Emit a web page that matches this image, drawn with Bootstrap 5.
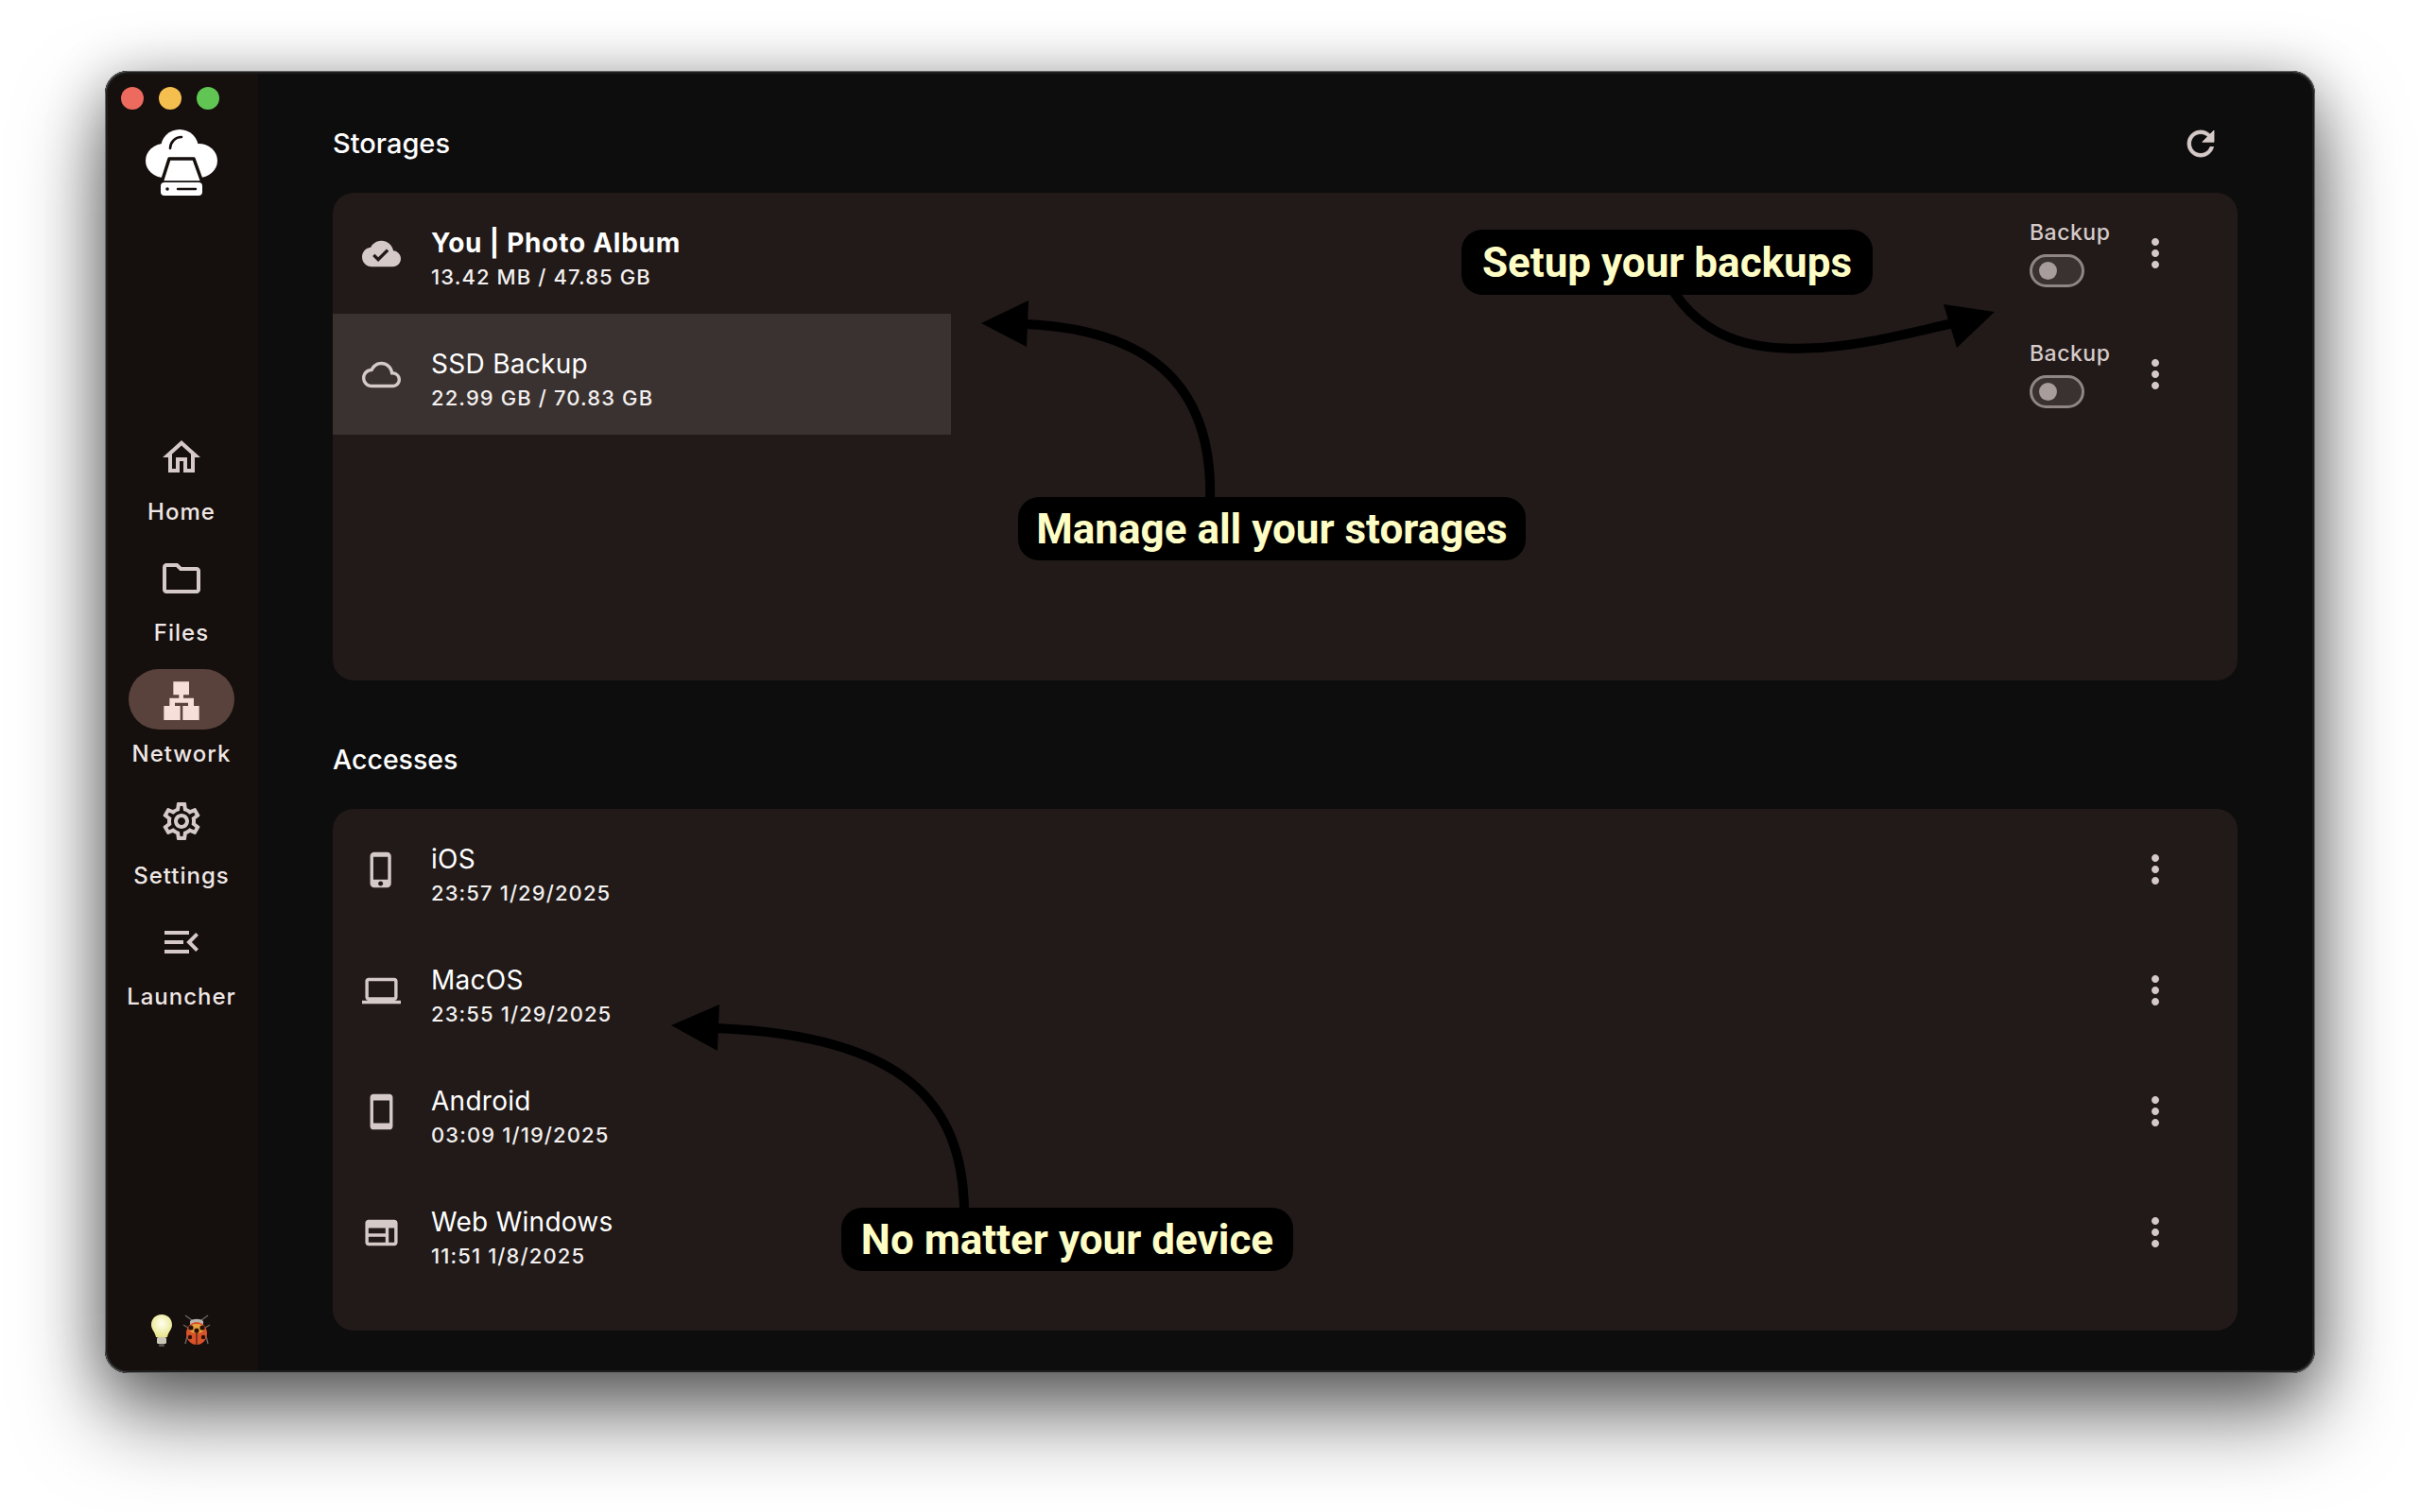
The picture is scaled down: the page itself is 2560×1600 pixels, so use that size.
<!doctype html>
<html lang="en"><head><meta charset="utf-8"><title>Storages</title>
<link href="https://cdn.jsdelivr.net/npm/bootstrap@5.3.0/dist/css/bootstrap.min.css" rel="stylesheet">
<style>
html,body{height:100%}
body{background:#fff;font-family:Inter,"Liberation Sans",sans-serif;color:#fff;overflow:hidden;padding:75px 111px 0 111px}
.app-window{position:relative;height:1378px;border-radius:24px;background:#0e0d0d;box-shadow:0 44px 90px rgba(0,0,0,.55),0 10px 60px rgba(0,0,0,.3);overflow:hidden}
.app-window::after{content:"";position:absolute;inset:0;border-radius:24px;box-shadow:inset 0 0 0 1px #666,inset 0 0 0 3px #1e1e1e;pointer-events:none;z-index:5}
.side-rail{width:162px;flex:none;background:#150f0d;padding-top:55px}
.lights{position:absolute;left:17px;top:17px;gap:16px}
.light{width:24px;height:24px;border-radius:50%}
.logo-box{height:83px}
.logo-box svg{width:80px;height:80px}
.nav-stack{margin-top:239px}
.rail-item{height:128.2px;color:#efe7e5}
.rail-pill{width:112px;height:64px;border-radius:32px;display:flex;align-items:center;justify-content:center}
.rail-pill.on{background:#5a423c}
.rail-item svg{width:48px;height:48px;fill:#d5cac8}
.rail-item .net-ic{fill:#f5dfd8}
.rail-label{font-size:24px;line-height:30px;font-weight:500;letter-spacing:1px;margin-top:11px}
.foot-icons{height:80px;gap:6px;padding-bottom:11px}
.main-pane{padding:0 82px 0 79px;min-width:0}
.sect-head{height:129px;padding-top:56px;font-size:29px;font-weight:500;line-height:42px}
.sect-head.two{height:136px;padding-top:63px;font-size:28.5px}
.refresh-ic{margin-right:18px;stroke:#d5cac8;stroke-width:.5}
.panel{background:#211a19;border-radius:22px;overflow:hidden}
.panel.top{height:516px}
.panel.bottom{height:552px}
.line{height:128px}
.line .icon-cell{width:104px;flex:none}
.line .icon-cell svg{width:41px;height:41px;fill:#d5cac8;margin-left:31px;display:block}
.line .txt{width:550px;flex:none;padding-top:10px}
.line.sel{background:#3a3230;width:654px}
.t1{font-size:28px;line-height:36px;letter-spacing:.28px}
.t1.b{font-weight:700;letter-spacing:.75px}
.t2{font-size:22px;line-height:30px;letter-spacing:1.1px;font-weight:500;margin-top:3px;color:#f3f0ef}
.right-tools{position:absolute;right:0;top:0;height:128px;width:220px}
.backup-col{position:absolute;left:0;top:28px;width:90px}
.backup-lbl{font-size:23px;line-height:28px;font-weight:500;color:#d5cac8;letter-spacing:.5px}
.tog{display:block;width:58px;height:35px;border:3px solid #8f8583;border-radius:18px;background:#3a3230;margin-top:9px;position:relative}
.tog::after{content:"";position:absolute;left:7px;top:5px;width:19px;height:19px;border-radius:50%;background:#a89d9a}
.kebab{width:48px;height:48px;fill:#d5cac8;display:block}
.keb-wrap{position:absolute;right:63px;top:40px}
.rowwrap{position:relative}
.note{position:absolute;background:#000;border-radius:22px;color:#fdfdc5;font-family:Roboto,"Liberation Sans",sans-serif;font-weight:700;font-size:44px;line-height:46px;white-space:nowrap;display:flex;align-items:center;justify-content:center}
.note.n1{left:1435px;top:168px;width:435px;height:69px}
.note.n2{left:966px;top:451px;width:537px;height:67px}
.note.n3{left:779px;top:1203px;width:478px;height:67px}
.arrows{position:absolute;left:-111px;top:-75px;width:2560px;height:1600px;pointer-events:none}
</style></head>
<body>
<div class="app-window d-flex">
  <aside class="side-rail d-flex flex-column align-items-center">
    <div class="lights d-flex"><span class="light" style="background:#ec6a5e"></span><span class="light" style="background:#f4bf4f"></span><span class="light" style="background:#61c554"></span></div>
    <div class="logo-box d-flex justify-content-center">
      <svg viewBox="152 130 80 80"><g fill="#fff"><circle cx="190" cy="157" r="20"/><ellipse cx="174" cy="170" rx="20" ry="18"/><ellipse cx="210" cy="170" rx="20" ry="18"/><rect x="172" y="160" width="40" height="28"/></g>
      <path d="M179 168h26l9 25h-43z" fill="#fff" stroke="#150f0d" stroke-width="3.5" stroke-linejoin="round"/>
      <rect x="170" y="193" width="44" height="14" rx="4" fill="#fff"/><circle cx="177" cy="200" r="1.8" fill="#150f0d"/><path d="M188 200h19" stroke="#150f0d" stroke-width="2.4" stroke-linecap="round"/>
      <path d="M180 157c0-6 5-12 12-12" fill="none" stroke="#150f0d" stroke-width="2.6" stroke-linecap="round"/></svg>
    </div>
    <nav class="nav-stack d-flex flex-column align-items-center">
      <div class="rail-item d-flex flex-column align-items-center"><span class="rail-pill"><svg viewBox="0 0 24 24"><path d="M12 5.69l5 4.5V18h-2v-6H9v6H7v-7.81l5-4.5M12 3L2 12h3v8h6v-6h2v6h6v-8h3L12 3z"/></svg></span><span class="rail-label">Home</span></div>
      <div class="rail-item d-flex flex-column align-items-center"><span class="rail-pill"><svg viewBox="0 0 24 24"><path d="M9.17 6l2 2H20v10H4V6h5.17M10 4H4c-1.1 0-1.99.9-1.99 2L2 18c0 1.1.9 2 2 2h16c1.1 0 2-.9 2-2V8c0-1.1-.9-2-2-2h-8l-2-2z"/></svg></span><span class="rail-label">Files</span></div>
      <div class="rail-item d-flex flex-column align-items-center"><span class="rail-pill on"><svg class="net-ic" viewBox="144 72 144 144"><path d="M190 88h50v42h-50zM208 130h14v10h-14zM178 140h77v15h-77zM178 155h17v10h-17zM237 155h18v10h-18zM160 165h52v45h-52zM220 165h52v45h-52z"/></svg></span><span class="rail-label">Network</span></div>
      <div class="rail-item d-flex flex-column align-items-center"><span class="rail-pill"><svg viewBox="0 0 24 24"><path d="M19.43 12.98c.04-.32.07-.64.07-.98 0-.34-.03-.66-.07-.98l2.11-1.65c.19-.15.24-.42.12-.64l-2-3.46c-.09-.16-.26-.25-.44-.25-.06 0-.12.01-.17.03l-2.49 1c-.52-.4-1.08-.73-1.69-.98l-.38-2.65C14.46 2.18 14.25 2 14 2h-4c-.25 0-.46.18-.49.42l-.38 2.65c-.61.25-1.17.59-1.69.98l-2.49-1c-.06-.02-.12-.03-.18-.03-.17 0-.34.09-.43.25l-2 3.46c-.13.22-.07.49.12.64l2.11 1.65c-.04.32-.07.65-.07.98 0 .33.03.66.07.98l-2.11 1.65c-.19.15-.24.42-.12.64l2 3.46c.09.16.26.25.44.25.06 0 .12-.01.17-.03l2.49-1c.52.4 1.08.73 1.69.98l.38 2.65c.03.24.24.42.49.42h4c.25 0 .46-.18.49-.42l.38-2.65c.61-.25 1.17-.59 1.69-.98l2.49 1c.06.02.12.03.18.03.17 0 .34-.09.43-.25l2-3.46c.12-.22.07-.49-.12-.64l-2.11-1.65zm-1.98-1.71c.04.31.05.52.05.73 0 .21-.02.43-.05.73l-.14 1.13.89.7 1.08.84-.7 1.21-1.27-.51-1.04-.42-.9.68c-.43.32-.84.56-1.25.73l-1.06.43-.16 1.13-.2 1.35h-1.4l-.19-1.35-.16-1.13-1.06-.43c-.43-.18-.83-.41-1.23-.71l-.91-.7-1.06.43-1.27.51-.7-1.21 1.08-.84.89-.7-.14-1.13c-.03-.31-.05-.54-.05-.74s.02-.43.05-.73l.14-1.13-.89-.7-1.08-.84.7-1.21 1.27.51 1.04.42.9-.68c.43-.32.84-.56 1.25-.73l1.06-.43.16-1.13.2-1.35h1.39l.19 1.35.16 1.13 1.06.43c.43.18.83.41 1.23.71l.91.7 1.06-.43 1.27-.51.7 1.21-1.07.85-.89.7.14 1.13zM12 8c-2.21 0-4 1.79-4 4s1.79 4 4 4 4-1.79 4-4-1.79-4-4-4zm0 6c-1.1 0-2-.9-2-2s.9-2 2-2 2 .9 2 2-.9 2-2 2z"/></svg></span><span class="rail-label">Settings</span></div>
      <div class="rail-item d-flex flex-column align-items-center"><span class="rail-pill"><svg viewBox="0 0 24 24"><path d="M3 18h13v-2H3v2zm0-5h10v-2H3v2zm0-7v2h13V6H3zm18 9.59L17.42 12 21 8.41 19.59 7l-5 5 5 5L21 15.59z"/></svg></span><span class="rail-label">Launcher</span></div>
    </nav>
    <div class="foot-icons mt-auto d-flex align-items-center">
      <svg width="26" height="36" viewBox="0 0 26 36"><defs><radialGradient id="bulbg" cx=".5" cy=".4" r=".6"><stop offset="0" stop-color="#fffff0"/><stop offset="1" stop-color="#e8e58a"/></radialGradient></defs><path d="M13 1C6 1 2 6 2 12c0 5 4 7 5 13h12c1-6 5-8 5-13C24 6 20 1 13 1z" fill="url(#bulbg)"/><rect x="8" y="25" width="10" height="7" rx="1.5" fill="#c9c6b8"/><rect x="10" y="32" width="6" height="3" rx="1" fill="#55524a"/></svg>
      <svg width="36" height="36" viewBox="0 0 36 36"><g stroke="#6b6662" stroke-width="1.4" fill="none"><path d="M13 7L6 2M23 7l7-5M9 15l-5-3M27 15l5-3M8 24l-2 8M28 24l2 8"/></g><path d="M11 8c3-3 11-3 14 0v4H11z" fill="#b9b6b2"/><ellipse cx="18" cy="21" rx="11" ry="12" fill="#d8522a"/><ellipse cx="18" cy="16" rx="8" ry="5" fill="#e8a23c"/><g fill="#2a1008"><circle cx="12" cy="15" r="2.6"/><circle cx="24" cy="15" r="2.6"/><circle cx="18" cy="18" r="2.6"/><circle cx="11" cy="25" r="2.2"/><circle cx="25" cy="25" r="2.2"/></g><path d="M18 18v15" stroke="#2a1008" stroke-width="1"/></svg>
    </div>
  </aside>
  <main class="main-pane flex-grow-1">
    <div class="sect-head d-flex justify-content-between"><span>Storages</span>
      <svg width="42" height="42" viewBox="0 0 24 24" fill="#d5cac8" class="refresh-ic"><path d="M17.65 6.35C16.2 4.9 14.21 4 12 4c-4.42 0-7.99 3.58-7.99 8s3.57 8 7.99 8c3.73 0 6.84-2.55 7.73-6h-2.08c-.82 2.33-3.04 4-5.65 4-3.31 0-6-2.69-6-6s2.69-6 6-6c1.66 0 3.14.69 4.22 1.78L13 11h7V4l-2.35 2.35z"/></svg></div>
    <section class="panel top">
      <div class="rowwrap">
        <div class="line d-flex align-items-center"><div class="icon-cell"><svg viewBox="0 0 24 24"><path d="M19.35 10.04C18.67 6.59 15.64 4 12 4 9.11 4 6.6 5.64 5.35 8.04 2.34 8.36 0 10.91 0 14c0 3.31 2.69 6 6 6h13c2.76 0 5-2.24 5-5 0-2.64-2.05-4.78-4.65-4.96zM10 17l-3.5-3.5 1.41-1.41L10 14.17 15.18 9l1.41 1.41L10 17z"/></svg></div><div class="txt"><div class="t1 b">You | Photo Album</div><div class="t2">13.42 MB / 47.85 GB</div></div></div>
        <div class="right-tools"><div class="backup-col"><span class="backup-lbl">Backup</span><span class="tog"></span></div><div class="keb-wrap"><svg class="kebab" viewBox="0 0 24 24"><path d="M12 8c1.1 0 2-.9 2-2s-.9-2-2-2-2 .9-2 2 .9 2 2 2zm0 2c-1.1 0-2 .9-2 2s.9 2 2 2 2-.9 2-2-.9-2-2-2zm0 6c-1.1 0-2 .9-2 2s.9 2 2 2 2-.9 2-2-.9-2-2-2z"/></svg></div></div>
      </div>
      <div class="rowwrap">
        <div class="line sel d-flex align-items-center"><div class="icon-cell"><svg viewBox="0 0 24 24"><path d="M12 6c2.62 0 4.88 1.86 5.39 4.43l.3 1.5 1.53.11c1.56.1 2.78 1.41 2.78 2.96 0 1.65-1.35 3-3 3H6c-2.21 0-4-1.79-4-4 0-2.05 1.53-3.76 3.56-3.97l1.07-.11.5-.95C8.08 7.14 9.94 6 12 6m0-2C9.11 4 6.6 5.64 5.35 8.04 2.34 8.36 0 10.91 0 14c0 3.31 2.69 6 6 6h13c2.76 0 5-2.24 5-5 0-2.64-2.05-4.78-4.65-4.96C18.67 6.59 15.64 4 12 4z"/></svg></div><div class="txt"><div class="t1">SSD Backup</div><div class="t2">22.99 GB / 70.83 GB</div></div></div>
        <div class="right-tools"><div class="backup-col"><span class="backup-lbl">Backup</span><span class="tog"></span></div><div class="keb-wrap"><svg class="kebab" viewBox="0 0 24 24"><path d="M12 8c1.1 0 2-.9 2-2s-.9-2-2-2-2 .9-2 2 .9 2 2 2zm0 2c-1.1 0-2 .9-2 2s.9 2 2 2 2-.9 2-2-.9-2-2-2zm0 6c-1.1 0-2 .9-2 2s.9 2 2 2 2-.9 2-2-.9-2-2-2z"/></svg></div></div>
      </div>
    </section>
    <div class="sect-head two">Accesses</div>
    <section class="panel bottom">
      <div class="rowwrap"><div class="line d-flex align-items-center"><div class="icon-cell"><svg viewBox="0 0 24 24"><path d="M15.5 1h-8C6.12 1 5 2.12 5 3.5v17C5 21.88 6.12 23 7.5 23h8c1.38 0 2.5-1.12 2.5-2.5v-17C18 2.12 16.88 1 15.5 1zm-4 21c-.83 0-1.5-.67-1.5-1.5s.67-1.5 1.5-1.5 1.5.67 1.5 1.5-.67 1.5-1.5 1.5zm4.5-4H7V4h9v14z"/></svg></div><div class="txt"><div class="t1">iOS</div><div class="t2">23:57 1/29/2025</div></div></div><div class="right-tools"><div class="keb-wrap"><svg class="kebab" viewBox="0 0 24 24"><path d="M12 8c1.1 0 2-.9 2-2s-.9-2-2-2-2 .9-2 2 .9 2 2 2zm0 2c-1.1 0-2 .9-2 2s.9 2 2 2 2-.9 2-2-.9-2-2-2zm0 6c-1.1 0-2 .9-2 2s.9 2 2 2 2-.9 2-2-.9-2-2-2z"/></svg></div></div></div>
      <div class="rowwrap"><div class="line d-flex align-items-center"><div class="icon-cell"><svg viewBox="0 0 24 24"><path d="M20 18c1.1 0 1.99-.9 1.99-2L22 6c0-1.1-.9-2-2-2H4c-1.1 0-2 .9-2 2v10c0 1.1.9 2 2 2H0v2h24v-2h-4zM4 6h16v10H4V6z"/></svg></div><div class="txt"><div class="t1">MacOS</div><div class="t2">23:55 1/29/2025</div></div></div><div class="right-tools"><div class="keb-wrap"><svg class="kebab" viewBox="0 0 24 24"><path d="M12 8c1.1 0 2-.9 2-2s-.9-2-2-2-2 .9-2 2 .9 2 2 2zm0 2c-1.1 0-2 .9-2 2s.9 2 2 2 2-.9 2-2-.9-2-2-2zm0 6c-1.1 0-2 .9-2 2s.9 2 2 2 2-.9 2-2-.9-2-2-2z"/></svg></div></div></div>
      <div class="rowwrap"><div class="line d-flex align-items-center"><div class="icon-cell"><svg viewBox="0 0 24 24"><path d="M17 1.01L7 1c-1.1 0-1.99.9-1.99 2v18c0 1.1.89 2 1.99 2h10c1.1 0 2-.9 2-2V3c0-1.1-.9-1.99-2-1.99zM17 19H7V5h10v14z"/></svg></div><div class="txt"><div class="t1">Android</div><div class="t2">03:09 1/19/2025</div></div></div><div class="right-tools"><div class="keb-wrap"><svg class="kebab" viewBox="0 0 24 24"><path d="M12 8c1.1 0 2-.9 2-2s-.9-2-2-2-2 .9-2 2 .9 2 2 2zm0 2c-1.1 0-2 .9-2 2s.9 2 2 2 2-.9 2-2-.9-2-2-2zm0 6c-1.1 0-2 .9-2 2s.9 2 2 2 2-.9 2-2-.9-2-2-2z"/></svg></div></div></div>
      <div class="rowwrap"><div class="line d-flex align-items-center"><div class="icon-cell"><svg viewBox="0 0 24 24"><path d="M20 4H4c-1.1 0-2 .9-2 2v12c0 1.1.9 2 2 2h16c1.1 0 2-.9 2-2V6c0-1.1-.9-2-2-2zM4 9h10.5v3.5H4V9zm0 5.5h10.5V18H4v-3.5zM20 18h-3.5V9H20v9z"/></svg></div><div class="txt"><div class="t1">Web Windows</div><div class="t2">11:51 1/8/2025</div></div></div><div class="right-tools"><div class="keb-wrap"><svg class="kebab" viewBox="0 0 24 24"><path d="M12 8c1.1 0 2-.9 2-2s-.9-2-2-2-2 .9-2 2 .9 2 2 2zm0 2c-1.1 0-2 .9-2 2s.9 2 2 2 2-.9 2-2-.9-2-2-2zm0 6c-1.1 0-2 .9-2 2s.9 2 2 2 2-.9 2-2-.9-2-2-2z"/></svg></div></div></div>
    </section>
  </main>
  <svg class="arrows" viewBox="0 0 2560 1600" fill="none" stroke="#000" stroke-width="10">
    <path d="M1770 308C1812 372 1880 370 1925 368C1975 365 2020 352 2075 340"/><path d="M2110 330L2056 322L2070 368z" fill="#000" stroke="none"/>
    <path d="M1280 530C1283 430 1240 350 1085 343"/><path d="M1038 342L1088 318L1086 367z" fill="#000" stroke="none"/>
    <path d="M1020 1280C1018 1170 960 1096 758 1088"/><path d="M710 1085L761 1063L759 1112z" fill="#000" stroke="none"/>
  </svg>
  <div class="note n1">Setup your backups</div>
  <div class="note n2">Manage all your storages</div>
  <div class="note n3">No matter your device</div>
</div>
</body></html>
